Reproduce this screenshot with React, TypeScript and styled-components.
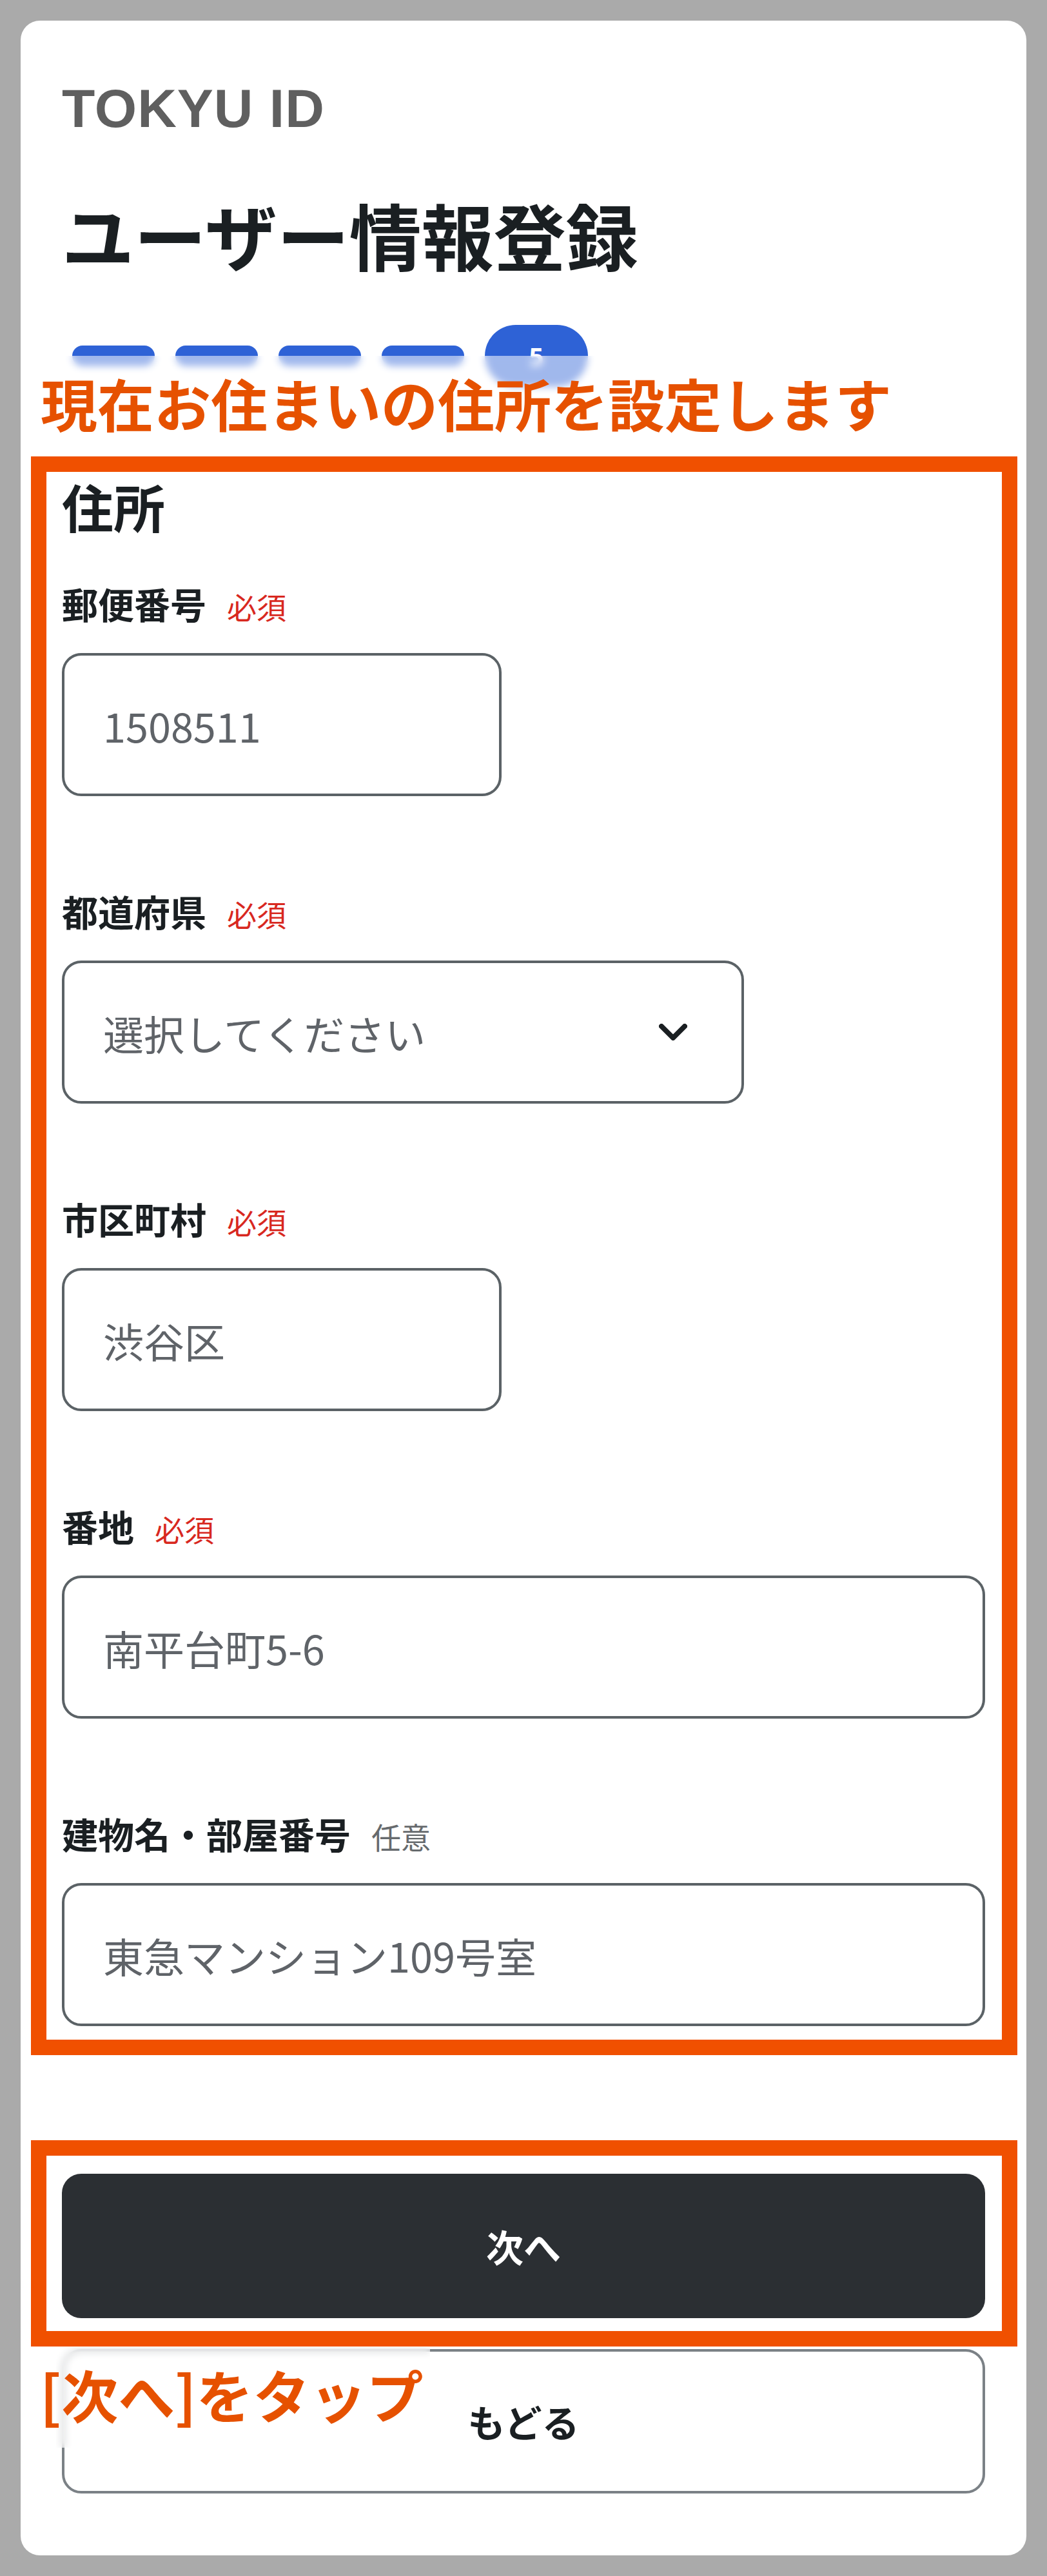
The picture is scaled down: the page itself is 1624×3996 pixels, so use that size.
import React from 'react'
import styled, { createGlobalStyle } from 'styled-components'

const COLORS = {
  page: '#aaaaaa',
  ink: '#1a1f22',
  brand: '#5f5f5f',
  blue: '#2e62d6',
  required: '#d8281f',
  optional: '#666a6d',
  inputBorder: '#5b6266',
  inputText: '#5f6368',
  dark: '#2b2f33',
  backBorder: '#7b8186',
  note: '#e65100',
  noteBox: '#f05000',
}

const GlobalStyle = createGlobalStyle`
  body {
    margin: 0;
    background: ${COLORS.page};
    font-family: "Noto Sans CJK JP", "Noto Sans", sans-serif;
    color: ${COLORS.ink};
  }
`

const Card = styled.main`
  margin: 32px;
  background: #fff;
  border-radius: 30px;
  padding: 94px 64px 96px;
`

const Brand = styled.div`
  font-family: "Liberation Sans", Arial, sans-serif;
  font-weight: 700;
  font-size: 84px;
  line-height: 84px;
  letter-spacing: 1px;
  color: ${COLORS.brand};
`

const Title = styled.h1`
  margin: 75px 0 0;
  font-size: 112px;
  line-height: 157px;
  font-weight: 700;
`

const Stepper = styled.div`
  position: relative;
  margin-top: 62px;
  height: 96px;
  padding-left: 16px;
  display: flex;
  align-items: center;
  gap: 32px;
`

const StepBar = styled.div`
  width: 128px;
  height: 32px;
  border-radius: 16px;
  background: ${COLORS.blue};
`

const StepCurrent = styled.div`
  width: 160px;
  height: 96px;
  border-radius: 48px;
  background: ${COLORS.blue};
  color: #fff;
  font-family: "Noto Sans", sans-serif;
  font-weight: 700;
  font-size: 40px;
  display: flex;
  align-items: center;
  justify-content: center;
`

/* annotation label laid over the screenshot, with a frosted backdrop */
const Note = styled.div<{ $top: number; $left: number; $padLeft: number; $width: number; $height: number }>`
  position: absolute;
  top: ${(p) => p.$top}px;
  left: ${(p) => p.$left}px;
  z-index: 2;
  padding-top: 12px;
  white-space: nowrap;
  font-size: 88px;
  line-height: 120px;
  font-weight: 700;
  color: ${COLORS.note};

  &::before {
    content: '';
    position: absolute;
    top: 0;
    left: ${(p) => p.$padLeft}px;
    width: ${(p) => p.$width}px;
    height: ${(p) => p.$height}px;
    background: rgba(255, 255, 255, 0.55);
    backdrop-filter: blur(6px);
    z-index: -1;
  }
`

const Highlight = styled.div<{ $inset: string }>`
  position: relative;

  &::after {
    content: '';
    position: absolute;
    inset: ${(p) => p.$inset};
    border: 24px solid ${COLORS.noteBox};
    pointer-events: none;
  }
`

const Section = styled(Highlight)`
  margin-top: 128px;
`

const SectionTitle = styled.h2`
  margin: 0;
  font-size: 80px;
  line-height: 112px;
  font-weight: 700;
`

const Field = styled.div<{ $first?: boolean }>`
  margin-top: ${(p) => (p.$first ? 56 : 138)}px;
`

const LabelRow = styled.div`
  display: flex;
  align-items: baseline;
  gap: 32px;
  height: 80px;
  line-height: 80px;
  margin-bottom: 37px;
`

const Label = styled.span`
  font-size: 56px;
  font-weight: 700;
`

const Badge = styled.span<{ $optional?: boolean }>`
  font-size: 46px;
  color: ${(p) => (p.$optional ? COLORS.optional : COLORS.required)};
`

const TextInput = styled.input<{ $width?: number }>`
  display: block;
  box-sizing: border-box;
  width: ${(p) => (p.$width ? `${p.$width}px` : '100%')};
  height: 222px;
  margin: 0;
  padding: 0 60px;
  border: 4px solid ${COLORS.inputBorder};
  border-radius: 30px;
  background: #fff;
  font-family: inherit;
  font-size: 63px;
  color: ${COLORS.inputText};
  outline: none;
`

const SelectBox = styled.div<{ $width: number }>`
  box-sizing: border-box;
  width: ${(p) => p.$width}px;
  height: 222px;
  padding: 0 84px 0 60px;
  border: 4px solid ${COLORS.inputBorder};
  border-radius: 30px;
  display: flex;
  align-items: center;
  justify-content: space-between;
  font-size: 63px;
  color: ${COLORS.inputText};
`

const Actions = styled.div`
  margin-top: 229px;
  display: flex;
  flex-direction: column;
  gap: 48px;
`

const Button = styled.button<{ $primary?: boolean }>`
  display: flex;
  align-items: center;
  justify-content: center;
  box-sizing: border-box;
  width: 100%;
  height: 224px;
  margin: 0;
  border-radius: 30px;
  border: ${(p) => (p.$primary ? 'none' : `4px solid ${COLORS.backBorder}`)};
  background: ${(p) => (p.$primary ? COLORS.dark : '#fff')};
  color: ${(p) => (p.$primary ? '#fff' : COLORS.ink)};
  font-family: inherit;
  font-size: 58px;
  font-weight: 700;
`

const BackWrap = styled.div`
  position: relative;
`

function Chevron() {
  return (
    <svg width="44" height="26" viewBox="0 0 44 26" fill="none">
      <path d="M4 4 L22 22 L40 4" stroke={COLORS.ink} strokeWidth="8" strokeLinecap="round" strokeLinejoin="round" />
    </svg>
  )
}

type FieldDef = {
  label: string
  optional?: boolean
  value: string
  width?: number
}

const fields: FieldDef[] = [
  { label: '郵便番号', value: '1508511', width: 682 },
  { label: '都道府県', value: '選択してください', width: 1058 },
  { label: '市区町村', value: '渋谷区', width: 682 },
  { label: '番地', value: '南平台町5-6' },
  { label: '建物名・部屋番号', optional: true, value: '東急マンション109号室' },
]

export default function App() {
  return (
    <>
      <GlobalStyle />
      <Card>
        <Brand>TOKYU ID</Brand>
        <Title>ユーザー情報登録</Title>

        <Stepper>
          <StepBar />
          <StepBar />
          <StepBar />
          <StepBar />
          <StepCurrent>5</StepCurrent>
          <Note $top={48} $left={-33} $padLeft={-20} $width={1380} $height={150}>
            現在お住まいの住所を設定します
          </Note>
        </Stepper>

        <Section $inset="-20px -50px -45px -48px">
          <SectionTitle>住所</SectionTitle>
          {fields.map((f, i) => (
            <Field key={f.label} $first={i === 0}>
              <LabelRow>
                <Label>{f.label}</Label>
                <Badge $optional={f.optional}>{f.optional ? '任意' : '必須'}</Badge>
              </LabelRow>
              {f.label === '都道府県' ? (
                <SelectBox $width={f.width ?? 1058}>
                  <span>{f.value}</span>
                  <Chevron />
                </SelectBox>
              ) : (
                <TextInput $width={f.width} defaultValue={f.value} readOnly />
              )}
            </Field>
          ))}
        </Section>

        <Actions>
          <Highlight $inset="-52px -50px -44px -48px">
            <Button $primary>次へ</Button>
          </Highlight>
          <BackWrap>
            <Button>もどる</Button>
            <Note $top={-3} $left={-34} $padLeft={25} $width={580} $height={156}>
              [次へ]をタップ
            </Note>
          </BackWrap>
        </Actions>
      </Card>
    </>
  )
}
